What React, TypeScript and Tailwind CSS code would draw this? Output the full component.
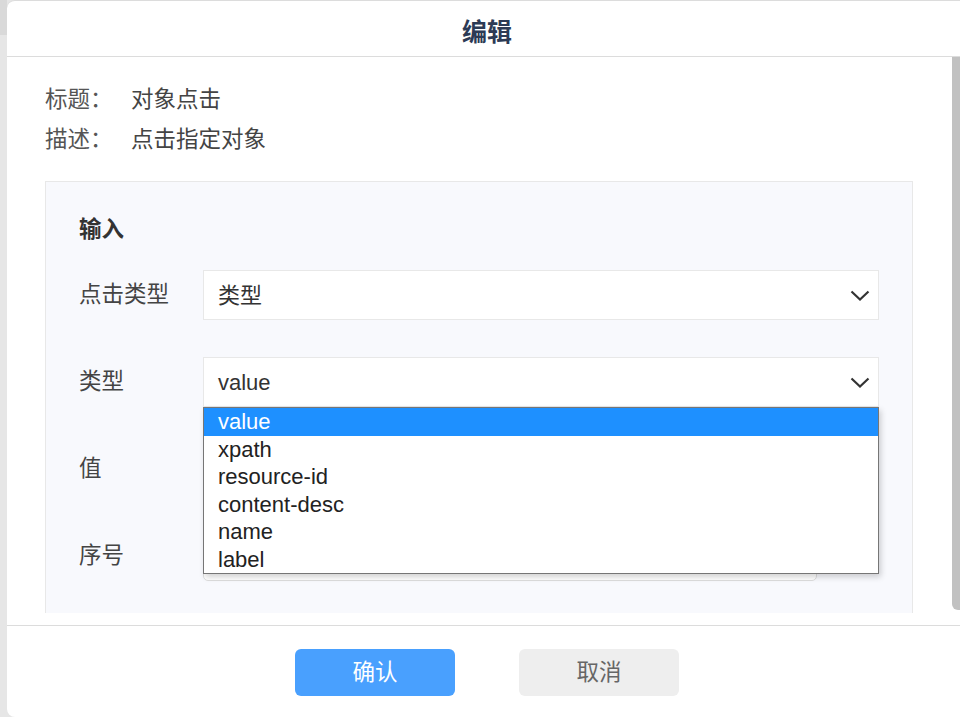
import React from "react";

const font = { fontFamily: '"Liberation Sans", "Noto Sans CJK SC", sans-serif' };

const options = ["value", "xpath", "resource-id", "content-desc", "name", "label"];

function Chevron() {
  return (
    <svg width="20" height="11" viewBox="0 0 20 11" className="shrink-0">
      <path d="M1.5 1.5 L10 9.5 L18.5 1.5" fill="none" stroke="#333" strokeWidth="2.2" />
    </svg>
  );
}

function SelectBox({ value, children }: { value: string; children?: React.ReactNode }) {
  return (
    <div className="relative">
      <div className="w-[676px] h-[50px] border border-[#e8e8e8] bg-white flex items-center justify-between pl-[14px] pr-[8px] text-[22px] text-[#333]">
        <span>{value}</span>
        <Chevron />
      </div>
      {children}
    </div>
  );
}

export default function App() {
  return (
    <div className="w-[960px] h-[717px] overflow-hidden bg-[#e6e6e6] flex" style={font}>
      <div className="w-[7px] shrink-0 flex flex-col">
        <div className="h-[35px] bg-[#d9d9d9]" />
      </div>
      <div className="w-[960px] shrink-0 h-[717px] bg-white rounded-[8px] border-t border-[#dcdcdc] flex flex-col">
        {/* header */}
        <div className="h-[56px] border-b border-[#dcdcdc] flex items-center justify-center">
          <h2 className="mt-[8px] text-[25px] font-bold text-[#2c3a55]">编辑</h2>
        </div>

        {/* body */}
        <div className="h-[568px] flex">
          <div className="flex-1 overflow-hidden pl-[38px] pr-[39px] pt-[23px]">
            <div className="flex h-[40px] items-center text-[22.5px]">
              <span className="w-[86px] text-[#555]">标题：</span>
              <span className="text-[#444]">对象点击</span>
            </div>
            <div className="flex h-[40px] items-center text-[22.5px]">
              <span className="w-[86px] text-[#555]">描述：</span>
              <span className="text-[#444]">点击指定对象</span>
            </div>

            <div className="mt-[21px] h-[432px] border border-b-0 border-[#e8e8e8] bg-[#f8f9fd] px-[33px] pt-[36px]">
              <div className="h-[24px] flex items-center text-[22.5px] font-bold text-[#333]">输入</div>

              <div className="mt-[28px] flex items-center h-[50px]">
                <span className="w-[124px] text-[22.5px] text-[#444]">点击类型</span>
                <SelectBox value="类型" />
              </div>

              <div className="mt-[37px] flex items-center h-[50px] relative z-10">
                <span className="w-[124px] text-[22.5px] text-[#444]">类型</span>
                <SelectBox value="value">
                  <div className="absolute left-0 top-full w-[676px] border border-[#767676] bg-white shadow-[2px_3px_6px_rgba(0,0,0,0.18)]">
                    {options.map((o, i) => (
                      <div
                        key={o}
                        className={
                          i === 0
                            ? "h-[27.5px] flex items-center pl-[14px] text-[22px] bg-[#1e90ff] text-white"
                            : "h-[27.5px] flex items-center pl-[14px] text-[22px] text-[#222]"
                        }
                      >
                        {o}
                      </div>
                    ))}
                  </div>
                </SelectBox>
              </div>

              <div className="mt-[37px] flex items-center h-[50px]">
                <span className="w-[124px] text-[22.5px] text-[#444]">值</span>
                <div className="w-[676px] h-[50px] border border-[#e8e8e8] bg-white" />
              </div>

              <div className="mt-[37px] flex items-center h-[50px]">
                <span className="w-[124px] text-[22.5px] text-[#444]">序号</span>
                <div className="w-[614px] h-[50px] border border-[#dedede] rounded-[5px] bg-white" />
              </div>
            </div>
          </div>
          <div className="w-[15px] shrink-0">
            <div className="h-[553px] bg-[#c1c1c1] rounded-b-[6px]" />
          </div>
        </div>

        {/* footer */}
        <div className="flex-1 border-t border-[#dcdcdc] flex justify-center gap-[64px] pt-[23px]">
          <button className="w-[160px] h-[47px] rounded-[6px] bg-[#49a0fe] text-white text-[22.5px]">确认</button>
          <button className="w-[160px] h-[47px] rounded-[6px] bg-[#eeeeee] text-[#666] text-[22.5px]">取消</button>
        </div>
      </div>
    </div>
  );
}
